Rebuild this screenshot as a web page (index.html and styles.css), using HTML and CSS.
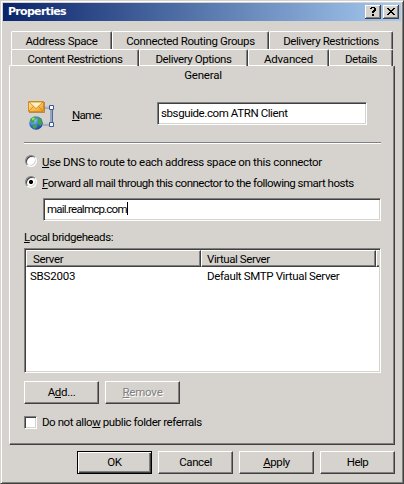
FILE: index.html
```html
<!DOCTYPE html>
<html lang="en">
<head>
<meta charset="utf-8">
<title>Properties</title>
<link rel="stylesheet" href="styles.css">
</head>
<body>
<div class="window">
  <header class="titlebar">
    <h1 class="title">Properties</h1>
    <button class="tbtn" aria-label="Help"><svg width="8" height="9" viewBox="0 0 8 9" shape-rendering="crispEdges"><path d="M2 0h4v1h1v3h-1v1h-1v1h-2v-2h1v-1h1v-2h-2v1h-2v-1h1zM3 7h2v2h-2z"/></svg></button>
    <button class="tbtn" aria-label="Close"><svg width="8" height="7" viewBox="0 0 8 7" shape-rendering="crispEdges"><path d="M0 0h2v1h1v1h2v-1h1v-1h2v1h-1v1h-1v1h-1v1h1v1h1v1h1v1h-2v-1h-1v-1h-2v1h-1v1h-2v-1h1v-1h1v-1h1v-1h-1v-1h-1v-1h-1z"/></svg></button>
  </header>
  <nav class="tabs">
    <div class="row row-top">
      <div class="tab"><span class="t-as">Address Space</span></div>
      <div class="tab"><span class="t-crg">Connected Routing Groups</span></div>
      <div class="tab"><span class="t-dr">Delivery Restrictions</span></div>
    </div>
    <div class="row row-mid">
      <div class="tab"><span class="t-cr">Content Restrictions</span></div>
      <div class="tab"><span class="t-do">Delivery Options</span></div>
      <div class="tab"><span class="t-adv">Advanced</span></div>
      <div class="tab"><span class="t-det">Details</span></div>
    </div>
  </nav>
  <main class="page">
    <div class="active-tab"><span class="t-gen">General</span></div>
    <div class="name-row">
      <svg class="icon" width="28" height="32" viewBox="0 0 28 32">
        <defs>
          <linearGradient id="env" x1="0" y1="0" x2="1" y2="1"><stop offset="0" stop-color="#ffe9a0"/><stop offset="1" stop-color="#f09a18"/></linearGradient>
          <radialGradient id="globe" cx=".35" cy=".3" r=".75"><stop offset="0" stop-color="#a8d0f8"/><stop offset=".5" stop-color="#3f7fd4"/><stop offset="1" stop-color="#1c3f94"/></radialGradient>
        </defs>
        <path d="M16 6.500h7M15 23.500h8" stroke="#6f86b4" stroke-width="2"/>
        <path d="M16 6h6M15 23h7" stroke="#dce6f6" stroke-width="1"/>
        <path d="M23.500 8v14" stroke="#526a9c" stroke-width="3"/>
        <path d="M23 8v14" stroke="#d3def2" stroke-width="1"/>
        <path d="M21.500 4.500h4v4h-4zM21.500 21.500h4v4h-4z" fill="#f4f8ff" stroke="#42598e"/>
        <path d="M.5.500h15v10h-15z" fill="url(#env)" stroke="#d58d21"/>
        <path d="M1 10l5-5M15 10l-5-5" stroke="#d88a1c" fill="none"/>
        <path d="M1 1h14l-7 6.500z" fill="#fff1c4" stroke="#c98420" stroke-width=".8"/>
        <path d="M1 11.500h15.500V1" fill="none" stroke="#a8671c" stroke-width=".7"/>
        <circle cx="8" cy="22" r="6.800" fill="url(#globe)"/>
        <path d="M3 17.500l3-2 3 .5-1 2-2 1 1 2-3 1-2-2zM10 17l3 1 1.500 4-2 3-2-2-1-3zM5 23l3 1 1 2-2 2-2-1z" fill="#3fa64a"/>
        <path d="M4 17.500l2-1 1 .5-1 1.500-2 1z" fill="#a4dc7c"/>
      </svg>
      <label class="t-name"><u>N</u>ame:</label>
      <div class="field name-field"><span class="t-nv">sbsguide.com ATRN Client</span></div>
    </div>
    <div class="divider"></div>
    <div class="option opt-dns"><span class="radio"></span><span class="t-dns"><u>U</u>se DNS to route to each address space on this connector</span></div>
    <div class="option opt-fwd"><span class="radio checked"></span><span class="t-fwd"><u>F</u>orward all mail through this connector to the following smart hosts</span></div>
    <div class="field host-field"><span class="t-host">mail.realmcp.com</span><i class="caret"></i></div>
    <div class="list-label"><span class="t-lb"><u>L</u>ocal bridgeheads:</span></div>
    <div class="list">
      <div class="list-head"><div class="col"><span class="t-srv">Server</span></div><div class="col col-b"><span class="t-vs">Virtual Server</span></div><div class="col rest"></div></div>
      <div class="list-row"><div class="cell"><span class="t-sbs">SBS2003</span></div><div class="cell cell-b"><span class="t-def">Default SMTP Virtual Server</span></div></div>
    </div>
    <div class="list-actions">
      <button class="btn"><span class="t-add">A<u>d</u>d...</span></button>
      <button class="btn disabled"><span class="t-rem"><u>R</u>emove</span></button>
    </div>
    <div class="option opt-ref"><span class="check"></span><span class="t-ref">Do not allo<u>w</u> public folder referrals</span></div>
  </main>
  <footer class="actions">
    <button class="btn default"><span class="t-ok">OK</span></button>
    <button class="btn"><span class="t-can">Cancel</span></button>
    <button class="btn"><span class="t-app"><u>A</u>pply</span></button>
    <button class="btn"><span class="t-help">Help</span></button>
  </footer>
</div>
</body>
</html>
```
FILE: styles.css
```css
:root {
  --face: #d6d3ce;
  --light: #fff;
  --shadow: #808080;
  --dark: #404040;
}
* { box-sizing: border-box; }
body {
  margin: 0;
  color: #000;
  font: 11.5px/14px Roboto, "Liberation Sans", sans-serif;
}
span, label { white-space: nowrap; flex-shrink: 0; }
u { text-decoration: underline; text-decoration-thickness: 1px; text-underline-offset: 1px; text-decoration-skip-ink: none; }
.window {
  width: 404px;
  height: 484px;
  padding: 2px 1px 0 2px;
  background: var(--face);
  border: 1px solid;
  border-color: var(--face) var(--dark) var(--dark) var(--face);
  box-shadow: inset 1px 1px var(--light), inset -1px -1px var(--shadow);
}
.titlebar {
  display: flex;
  align-items: center;
  height: 18px;
  padding: 0 2px 0 5px;
  margin-right: 1px;
  background: linear-gradient(90deg, #0a246a, #a6caf0);
}
.title {
  flex: 1;
  margin: 0;
  color: #fff;
  font: bold 11px/18px "DejaVu Sans", sans-serif;
  letter-spacing: -.7px;
}
.tbtn {
  display: flex;
  align-items: center;
  justify-content: center;
  width: 16px;
  height: 14px;
  padding: 0 1px 1px 0;
  margin-left: 2px;
  border: 0;
  background: var(--face);
  box-shadow: inset -1px -1px var(--dark), inset 1px 1px var(--light), inset -2px -2px var(--shadow);
}
.tabs { margin: 10px 8px 0; }
.row { display: grid; }
.row-top { grid-template-columns: 101px 157px 124px; height: 18px; }
.row-mid { grid-template-columns: 128px 109px 81px 64px; height: 16px; }
.tab {
  display: flex;
  justify-content: center;
  padding-top: 2px;
  border-top: 1px solid var(--light);
  border-left: 1px solid var(--light);
  border-right: 1px solid var(--dark);
  border-radius: 2px 2px 0 0;
  box-shadow: inset -1px 0 var(--shadow);
}
.page {
  width: 386px;
  height: 380px;
  margin-left: 6px;
  border: 1px solid;
  border-color: var(--light) var(--dark) var(--dark) var(--light);
  border-radius: 2px 2px 0 0;
  box-shadow: inset -1px -1px var(--shadow);
  padding: 0 12px 0 14px;
}
.active-tab { height: 35px; padding-top: 2px; text-align: center; }
.name-row { display: flex; height: 42px; }
.icon { margin-left: 4px; }
.name-row label { width: 85px; margin: 7px 0 0 16px; }
.field {
  display: flex;
  align-items: flex-start;
  height: 23px;
  padding: 3px 0 0 3px;
  border: 1px solid;
  border-color: var(--shadow) var(--light) var(--light) var(--shadow);
  box-shadow: inset 1px 1px var(--dark), inset -1px -1px var(--face);
  background: #fff;
}
.name-field { width: 210px; margin-top: 1px; }
.divider { width: 357px; height: 2px; margin-top: -1px; border-top: 1px solid var(--shadow); border-bottom: 1px solid var(--light); }
.option { display: flex; align-items: center; height: 14px; }
.opt-dns { margin-top: 11px; }
.opt-fwd { margin-top: 7px; }
.radio {
  width: 12px;
  height: 12px;
  margin: 0 5px 2px 1px;
  border: 1px solid;
  border-color: var(--shadow) var(--light) var(--light) var(--shadow);
  border-radius: 50%;
  background: #fff;
  box-shadow: inset 1px 1px var(--dark), inset -1px -1px var(--face);
}
.radio.checked { background: radial-gradient(circle at 5px 5px, #000 1.700px, #fff 2.400px); }
.host-field { width: 338px; margin: 8px 0 0 19px; }
.caret { width: 1px; height: 13px; background: #000; }
.list-label { margin-top: 9px; height: 18px; }
.list {
  width: 357px;
  height: 125px;
  padding: 1px;
  border: 1px solid;
  border-color: var(--shadow) var(--light) var(--light) var(--shadow);
  box-shadow: inset 1px 1px var(--dark), inset -1px -1px var(--face);
  background: #fff;
}
.list-head { display: grid; grid-template-columns: 175px 175px 3px; height: 17px; }
.col {
  padding: 1px 0 0 6px;
  background: var(--face);
  border: 1px solid;
  border-color: var(--light) var(--dark) var(--dark) var(--light);
  box-shadow: inset -1px -1px var(--shadow);
}
.col-b { padding-left: 5px; }
.rest { padding: 0; border-right: 0; box-shadow: inset 0 -1px var(--shadow); }
.list-row { display: grid; grid-template-columns: 175px 175px; padding-top: 2px; }
.cell { padding-left: 4px; }
.cell-b { padding-left: 6px; }
.list-actions { display: flex; gap: 6px; margin-top: 8px; }
.btn {
  display: flex;
  align-items: flex-start;
  justify-content: center;
  width: 75px;
  height: 23px;
  padding: 3px 0 0;
  border: 1px solid;
  border-color: var(--light) var(--dark) var(--dark) var(--light);
  background: var(--face);
  box-shadow: inset -1px -1px var(--shadow);
  color: #000;
  font: inherit;
}
.btn.default { border-color: #000; box-shadow: inset 1px 1px var(--light), inset -1px -1px var(--dark), inset -2px -2px var(--shadow); }
.btn.disabled { color: var(--shadow); text-shadow: 1px 1px #fff; }
.opt-ref { margin-top: 11px; }
.check {
  width: 13px;
  height: 13px;
  margin-right: 5px;
  border: 1px solid;
  border-color: var(--shadow) var(--light) var(--light) var(--shadow);
  box-shadow: inset 1px 1px var(--dark), inset -1px -1px var(--face);
  background: #fff;
}
.actions { display: flex; gap: 6px; margin: 6px 0 0 74px; }

/* Tracking tuned per label */
.t-as, .t-crg, .t-srv, .t-def { letter-spacing: -.36px; }
.t-dr, .t-nv, .t-can, .t-app { letter-spacing: -.4px; }
.t-cr, .t-det, .t-help { letter-spacing: -.47px; }
.t-do, .t-lb, .t-vs, .t-ref { letter-spacing: -.43px; }
.t-adv, .t-gen, .t-sbs, .t-rem { letter-spacing: -.22px; }
.t-dns, .t-add, .t-ok { letter-spacing: -.31px; }
.t-fwd { letter-spacing: -.51px; }
.t-name { letter-spacing: -.7px; }
.t-host { letter-spacing: -.78px; }
```
